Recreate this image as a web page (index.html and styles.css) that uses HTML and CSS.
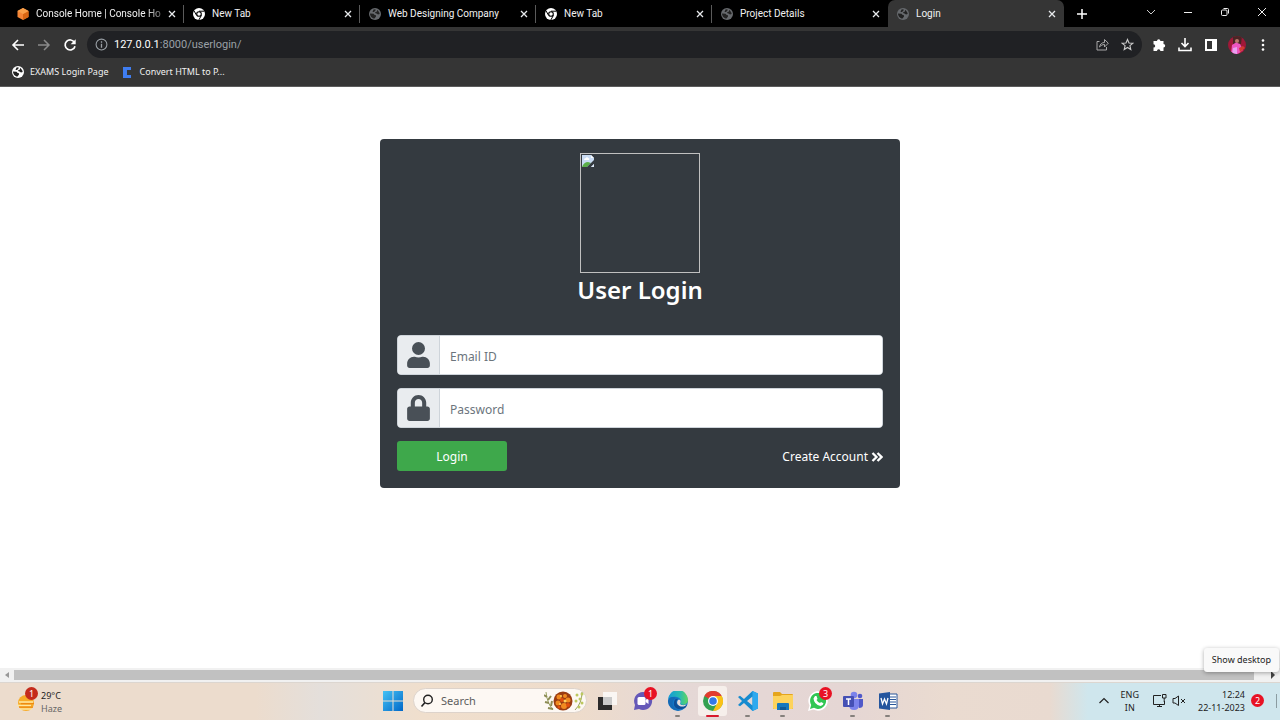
FILE: index.html
```html
<!DOCTYPE html>
<html lang="en">
<head>
<meta charset="utf-8">
<meta name="viewport" content="width=device-width, initial-scale=1">
<title>Login</title>
<link rel="stylesheet" href="styles.css">
</head>
<body>
<svg class="defs" aria-hidden="true">
  <symbol id="globe" viewBox="0 0 12 12"><circle cx="6" cy="6" r="6" fill="currentColor"/><path d="M1 5.500 4.500 5.800C5.500 6.300 5.200 7.400 7 7.200L7 8.500 5.500 10.500C3 10.500 1 8 1 5.500ZM4.500 1.500 6.500 1.200 6.500 2.500 5 4 3.500 4ZM8 1.800C9.500 3 10.500 4.500 10.700 6L9 6.500 7.500 5.500 6 5 6.500 4 8 3.500Z" class="globe-land"/></symbol>
  <symbol id="chrome-mono" viewBox="0 0 12 12"><circle cx="6" cy="6" r="6" fill="#fff"/><circle cx="6" cy="6" r="2.300" fill="#fff" stroke="#000" stroke-width="1.100"/><path d="M6 3.200H11.300M3.600 7.400 1 2.800M8.400 7.400 5.800 12" stroke="#000" stroke-width="1"/></symbol>
  <symbol id="x" viewBox="0 0 8 8"><path d="M1 1 7 7M7 1 1 7" stroke="#e8eaed" stroke-width="1.300" fill="none"/></symbol>
</svg>

<header class="browser">
  <nav class="tabs" aria-label="Tabs">
    <div class="tab"><svg class="favicon" viewBox="0 0 12 12"><path d="M6 0 11.500 3V9L6 12 .5 9V3Z" fill="#f58536"/><path d="M6 6 11.500 3V9L6 12Z" fill="#d86613"/><path d="M6 0 11.500 3 6 6 .5 3Z" fill="#f9a04a"/></svg><span class="tab-title fade">Console Home | Console Ho</span><button class="close" aria-label="Close tab"><svg><use href="#x"/></svg></button></div>
    <div class="tab"><svg class="favicon"><use href="#chrome-mono"/></svg><span class="tab-title">New Tab</span><button class="close" aria-label="Close tab"><svg><use href="#x"/></svg></button></div>
    <div class="tab"><svg class="favicon dim"><use href="#globe"/></svg><span class="tab-title">Web Designing Company</span><button class="close" aria-label="Close tab"><svg><use href="#x"/></svg></button></div>
    <div class="tab"><svg class="favicon"><use href="#chrome-mono"/></svg><span class="tab-title">New Tab</span><button class="close" aria-label="Close tab"><svg><use href="#x"/></svg></button></div>
    <div class="tab last"><svg class="favicon dim"><use href="#globe"/></svg><span class="tab-title">Project Details</span><button class="close" aria-label="Close tab"><svg><use href="#x"/></svg></button></div>
    <div class="tab active"><svg class="favicon dim"><use href="#globe"/></svg><span class="tab-title">Login</span><button class="close" aria-label="Close tab"><svg><use href="#x"/></svg></button></div>
    <button class="new-tab" aria-label="New tab"><svg viewBox="0 0 10 10"><path d="M5 0V10M0 5H10" stroke="#fff" stroke-width="1.500"/></svg></button>
    <div class="window-controls">
      <button aria-label="Search tabs"><svg viewBox="0 0 10 10"><path d="M1 3 5 7 9 3" stroke="#ccc" fill="none"/></svg></button>
      <button aria-label="Minimize"><svg viewBox="0 0 10 10"><path d="M1 5.500H9" stroke="#eee"/></svg></button>
      <button aria-label="Restore"><svg viewBox="0 0 10 10"><rect x="1.500" y="3" width="5.500" height="5.500" rx="1" stroke="#eee" fill="none"/><path d="M3.500 1.500H7.500Q8.500 1.500 8.500 2.500V6.500" stroke="#eee" fill="none"/></svg></button>
      <button aria-label="Close"><svg viewBox="0 0 10 10"><path d="M1 1 9 9M9 1 1 9" stroke="#eee"/></svg></button>
    </div>
  </nav>

  <div class="toolbar">
    <div class="nav-buttons">
      <button aria-label="Back"><svg viewBox="0 0 14 14"><path d="M13 7H2M7 2 2 7 7 12" fill="none" stroke="#fff" stroke-width="1.600"/></svg></button>
      <button aria-label="Forward"><svg viewBox="0 0 14 14"><path d="M1 7H12M7 2 12 7 7 12" fill="none" stroke="#8a8a8a" stroke-width="1.500"/></svg></button>
      <button aria-label="Reload"><svg viewBox="0 0 14 14"><path d="M11.500 4.500A5 5 0 1 0 12 8.200" fill="none" stroke="#fff" stroke-width="1.700"/><path d="M12.700 1.200V6.300H7.600Z" fill="#fff"/></svg></button>
    </div>
    <div class="omnibox">
      <svg class="info" viewBox="0 0 12 12"><circle cx="6" cy="6" r="5" fill="none" stroke="#9aa0a6"/><path d="M6 5.200V9M6 3V4.300" stroke="#9aa0a6" stroke-width="1.200"/></svg>
      <span class="url">127.0.0.1<span>:8000/userlogin/</span></span>
      <button aria-label="Share"><svg viewBox="0 0 13 13"><path d="M3.500 3.500H1V12H10.500V9M3.500 9C4 6 6 4.500 8.500 4.500V1.500L12.300 5.200 8.500 9V6.500C6.500 6.500 5 7.300 3.500 9Z" fill="none" stroke="#a8a8a8"/></svg></button>
      <button aria-label="Bookmark this page"><svg viewBox="0 0 13 13"><path d="M6.500 1.500 8 5 11.800 5.300 8.900 7.700 9.800 11.500 6.500 9.500 3.200 11.500 4.100 7.700 1.200 5.300 5 5Z" fill="none" stroke="#ccc" stroke-width="1.100"/></svg></button>
    </div>
    <div class="actions">
      <button aria-label="Extensions"><svg viewBox="0 0 14 14"><path d="M1.500 3H5A1.700 1.700 0 1 1 8.400 3H11.500V6A1.700 1.700 0 1 1 11.500 9.400V13H8.400A1.700 1.700 0 0 0 5 13H1.500V9.600A1.700 1.700 0 0 0 1.500 6.200Z" fill="#fff"/></svg></button>
      <button aria-label="Downloads"><svg viewBox="0 0 14 14"><path d="M7 0V8M3.500 5 7 8.500 10.500 5M1 9.500V12.500H13V9.500" fill="none" stroke="#fff" stroke-width="1.600"/></svg></button>
      <button aria-label="Side panel"><svg viewBox="0 0 14 14"><path d="M1 1H13V13H1ZM3 3V11H8V3Z" fill="#fff" fill-rule="evenodd"/></svg></button>
      <button aria-label="Profile"><svg class="avatar" viewBox="0 0 18 18"><clipPath id="round"><circle cx="9" cy="9" r="9"/></clipPath><g clip-path="url(#round)"><path d="M0 0H18V18H0Z" fill="#a01838"/><path d="M5 0H14L13 8H5Z" fill="#4a2525"/><circle cx="9" cy="5" r="2" fill="#b97b6c"/><path d="M4 9 8 6.500 12 8 15 14 10 18H3Z" fill="#ee55c0"/><path d="M5 12 9 11 9 18H4Z" fill="#e8a0f0"/><path d="M11 12 15 10 17 12 12 16Z" fill="#d23a30"/></g></svg></button>
      <button aria-label="Menu"><svg viewBox="0 0 14 14"><g fill="#fff"><circle cx="7" cy="2.500" r="1.300"/><circle cx="7" cy="7" r="1.300"/><circle cx="7" cy="11.500" r="1.300"/></g></svg></button>
    </div>
  </div>

  <nav class="bookmarks" aria-label="Bookmarks">
    <a href="#"><svg class="favicon light"><use href="#globe"/></svg>EXAMS Login Page</a>
    <a href="#"><svg class="favicon" viewBox="0 0 12 12"><path d="M1 1H9V4H5V9H9V12H1Z" fill="#3f7df0"/></svg>Convert HTML to P...</a>
  </nav>
</header>

<main class="page">
  <form class="card">
    <div class="missing-image" role="img" aria-label="Logo"><svg viewBox="0 0 14 14"><path d="M1 1H10L13 4V13H1Z" fill="#c9dbf3"/><path d="M10 1 13 4H10Z" fill="#f7fafe"/><path d="M3 6Q3 4 5 4 6 2 7 4 9 4 8 6Z" fill="#fff"/><path d="M1 13Q3 8 7 8L10 9 6 13Z" fill="#5aae49"/><path d="M5 14 14 5V9L9 14Z" fill="#343a40"/><path d="M10 13 13 10V13Z" fill="#dce6f5"/></svg></div>
    <h1>User Login</h1>
    <div class="field">
      <label for="email" aria-label="Email ID"><svg viewBox="0 0 448 512"><path d="M224 256A128 128 0 1 0 224 0a128 128 0 1 0 0 256zm89.600 32h-16.700c-22.200 10.200-46.900 16-72.900 16s-50.600-5.800-72.900-16h-16.700C60.200 288 0 348.200 0 422.400V464c0 26.500 21.500 48 48 48h352c26.500 0 48-21.500 48-48v-41.600c0-74.200-60.200-134.400-134.400-134.400z"/></svg></label>
      <input id="email" type="email" placeholder="Email ID">
    </div>
    <div class="field">
      <label for="password" aria-label="Password"><svg viewBox="0 0 448 512"><path d="M400 224h-24v-72C376 68.200 307.800 0 224 0S72 68.200 72 152v72H48c-26.500 0-48 21.500-48 48v192c0 26.500 21.500 48 48 48h352c26.500 0 48-21.500 48-48V272c0-26.500-21.500-48-48-48zm-104 0H152v-72c0-39.700 32.300-72 72-72s72 32.300 72 72v72z"/></svg></label>
      <input id="password" type="password" placeholder="Password">
    </div>
    <div class="form-actions">
      <button class="login" type="button">Login</button>
      <a href="#">Create Account <svg viewBox="0 0 12 10"><path d="M1.500 1 5.500 5 1.500 9M6.500 1 10.500 5 6.500 9" fill="none" stroke="#fff" stroke-width="2.300"/></svg></a>
    </div>
  </form>
</main>

<div class="scrollbar" aria-hidden="true"><span class="arrow"><svg viewBox="0 0 6 8"><path d="M5 1V7L1 4Z" fill="#999"/></svg></span><span class="thumb"></span><span class="arrow end"><svg viewBox="0 0 6 8"><path d="M1 0V8L5 4Z" fill="#444"/></svg></span></div>

<footer class="taskbar">
  <div class="weather">
    <span class="weather-icon"><svg viewBox="0 0 20 20"><circle cx="10" cy="11" r="8" fill="#f7ac28"/><path d="M3 10H17M1 13.500H15M4 17H16" stroke="#ffe7a3" stroke-width="1.300"/><path d="M5 11.700H18M3 15.200H17" stroke="#ee8a12" stroke-width="1.300"/></svg><b class="badge dark">1</b></span>
    <span class="weather-text">29°C<small>Haze</small></span>
  </div>
  <div class="apps">
    <button aria-label="Start"><svg viewBox="0 0 20 20"><defs><linearGradient id="win" x2="1" y2="1"><stop stop-color="#45c3f5"/><stop offset="1" stop-color="#0067c8"/></linearGradient></defs><path d="M0 0H9.500V9.500H0ZM10.500 0H20V9.500H10.500ZM0 10.500H9.500V20H0ZM10.500 10.500H20V20H10.500Z" fill="url(#win)"/></svg></button>
    <label class="search"><svg viewBox="0 0 14 14"><circle cx="8" cy="5.500" r="4.300" fill="none" stroke="#222" stroke-width="1.400"/><path d="M5 8.500 1.500 12.500" stroke="#222" stroke-width="1.600"/></svg><input type="text" placeholder="Search" aria-label="Search"><svg class="wreath" viewBox="0 0 40 22"><path d="M2 2Q3 13 9 20M38 2Q38 13 31 20" stroke="#98a25f" fill="none"/><path d="M3 7 0 5M4 10 7 6M5 13 1 12M7 16 8 11M9 19 4 18" stroke="#8d8c55" stroke-width="2"/><g fill="#bdc85f"><circle cx="33" cy="5" r="1.500"/><circle cx="36" cy="9" r="1.500"/><circle cx="32" cy="11" r="1.500"/><circle cx="38" cy="13" r="1.500"/><circle cx="35" cy="17" r="1.500"/><circle cx="38" cy="4" r="1.500"/></g><circle cx="19" cy="11" r="9.500" fill="#9a3c12"/><g fill="#f18a20"><circle cx="15" cy="7" r="2.500"/><circle cx="21" cy="6" r="2"/><circle cx="24" cy="10" r="2.500"/><circle cx="14" cy="13" r="2.500"/><circle cx="20" cy="16" r="3"/></g><g fill="#e24e0d"><circle cx="18" cy="10" r="2"/><circle cx="24" cy="15" r="2"/><circle cx="15" cy="17" r="1.500"/></g><g fill="#ffd25e"><circle cx="17" cy="6" r="1"/><circle cx="21" cy="11" r="1.500"/><circle cx="16" cy="14" r="1"/></g></svg></label>
    <button aria-label="Task view"><svg viewBox="0 0 20 20"><path d="M0 6H14V19H0Z" fill="#2b2b2b"/><path d="M5 1H19V14H5Z" fill="#fff" opacity=".75"/></svg></button>
    <button aria-label="Chat"><svg viewBox="0 0 20 20"><path d="M10 1A9 9 0 1 1 6 18L1 19 2 14A9 9 0 0 1 10 1Z" fill="#6558b8"/><rect x="4.500" y="6" width="8" height="8" rx="1.500" fill="#fff"/><path d="M12.500 9 15.500 7V13L12.500 11Z" fill="#fff"/></svg><b class="badge">1</b></button>
    <button class="running" aria-label="Edge"><svg viewBox="0 0 20 20"><defs><linearGradient id="edge" x2="1"><stop stop-color="#159bd8"/><stop offset=".6" stop-color="#29bcae"/><stop offset="1" stop-color="#62d65e"/></linearGradient></defs><circle cx="10" cy="10" r="10" fill="#1577c7"/><path d="M0 9A10 10 0 0 1 20 9C20 13 16 15 12 13 14 11 13 7 9 6 5 5 1 6 0 9Z" fill="url(#edge)"/><path d="M8 7C2 10 4 19 13 19A10 10 0 0 1 0 10C1 6 5 5 8 7Z" fill="#1669b5"/><path d="M10 8C6 11 10 17 17 15L19 14 18 16C13 20 5 18 6 12 6 9 8 7 10 8Z" fill="#114e96"/><path d="M10 9C13 8 13 11 12 13 14 15 18 14 19 13L17 15C12 17 7 13 10 9Z" fill="#e7dcda"/></svg></button>
    <button class="running current" aria-label="Chrome"><svg viewBox="0 0 20 20"><circle cx="10" cy="10" r="10" fill="#34a150"/><path d="M10 10 1.300 5A10 10 0 0 1 18.700 5Z" fill="#e33b2e"/><path d="M10 10V5H18.700A10 10 0 0 1 10 20L14.300 12Z" fill="#fbc116"/><circle cx="10" cy="10" r="5" fill="#fff"/><circle cx="10" cy="10" r="3.800" fill="#3478e5"/></svg></button>
    <button class="running" aria-label="Visual Studio Code"><svg viewBox="0 0 20 20"><path d="M14.500 0 20 2.500V17.500L14.500 20 6 12 2 15.200 0 14 4 10 0 6 2 4.800 6 8ZM14.500 5.500 9 10 14.500 14.500Z" fill="#168bcf" fill-rule="evenodd"/><path d="M14.500 0 20 2.500V17.500L14.500 20Z" fill="#2da9ef"/></svg></button>
    <button class="running" aria-label="File Explorer"><svg viewBox="0 0 20 20"><path d="M0 2Q0 1 1 1H7L9 3H19Q20 3 20 4V18H0Z" fill="#e5a51c"/><path d="M0 5H7L9 4H20V17Q20 18 19 18H1Q0 18 0 17Z" fill="#fdd35c"/><path d="M4 19V13Q4 12 5 12H15Q16 12 16 13V19Z" fill="#1678bd"/><path d="M7 19V16H13V19Z" fill="#0f5b98"/></svg></button>
    <button aria-label="WhatsApp"><svg viewBox="0 0 20 20"><path d="M0 20 1.500 14.500A9.700 9.700 0 1 1 5.500 18.500Z" fill="#fff"/><path d="M2 18 3.200 14A8 8 0 1 1 6 16.800Z" fill="#31c653"/><path d="M7 5 8.500 5 9.500 8 8.500 9Q10 11.500 12 12L13 11 15.500 12.300Q15 15 12.500 15 6 13.500 5.500 7.500Z" fill="#fff"/></svg><b class="badge">3</b></button>
    <button class="running" aria-label="Teams"><svg viewBox="0 0 20 20"><circle cx="11" cy="4" r="3.300" fill="#7b83eb"/><circle cx="17" cy="5" r="2.300" fill="#5059c9"/><path d="M13 8H20V14Q20 17 16 17Z" fill="#5059c9"/><path d="M6 8H16V14Q16 19 11 19 6 19 6 14Z" fill="#7b83eb"/><rect y="5" width="11" height="11" rx="1" fill="#4550b4"/><path d="M3 8H8M5.500 8V14" stroke="#fff" stroke-width="1.500"/></svg></button>
    <button class="running" aria-label="Word"><svg viewBox="0 0 20 20"><path d="M10 3H19V17H10Z" fill="#fff" stroke="#2b579a"/><path d="M12 6H18M12 8.500H18M12 11H18M12 13.500H18" stroke="#2b579a"/><path d="M1 2.500 12 1V19L1 17.500Z" fill="#24559e"/><path d="M3 7 4.500 13 6.500 8 8.500 13 10 7" fill="none" stroke="#fff" stroke-width="1.300"/></svg></button>
  </div>
  <div class="tray">
    <button aria-label="Show hidden icons"><svg viewBox="0 0 12 12"><path d="M1.500 8 6 3.500 10.500 8" fill="none" stroke="#222" stroke-width="1.200"/></svg></button>
    <span class="language">ENG<br>IN</span>
    <span class="status"><svg class="monitor" viewBox="0 0 14 14"><path d="M8 1.500H.5V10.500H11.500V7M4 12.500H9M6.500 10.500V12.500" fill="none" stroke="#222"/><path d="M9.500 .5H13V4H9.500ZM11.200 4V8" fill="none" stroke="#222"/></svg><svg viewBox="0 0 14 14"><path d="M1 4.500H3L6.500 2V11.500L3 9H1Z" fill="none" stroke="#222"/><path d="M9 5 13 9M13 5 9 9" stroke="#222"/></svg></span>
    <time class="clock" datetime="2023-11-22T12:24">12:24<br>22-11-2023</time>
    <b class="badge count">2</b>
    <span class="peek"></span>
    <div class="tooltip" role="tooltip">Show desktop</div>
  </div>
</footer>
</body>
</html>
```
FILE: styles.css
```css
* { box-sizing: border-box; }

body {
  margin: 0;
  min-height: 100vh;
  display: flex;
  flex-direction: column;
  background: #fff;
  font-family: "Noto Sans", "Open Sans", sans-serif;
}

button {
  display: flex;
  align-items: center;
  justify-content: center;
  margin: 0;
  padding: 0;
  border: 0;
  background: none;
  font: inherit;
}

a { color: inherit; text-decoration: none; }
svg { display: block; flex: none; }
.defs { position: absolute; width: 0; height: 0; }

/* Browser frame */
.browser {
  background: #353535;
  border-bottom: 1px solid #5c5c5c;
  color: #f1f1f1;
  font-family: Roboto, sans-serif;
  font-size: 10px;
}

.tabs {
  display: flex;
  height: 27px;
  padding-left: 8px;
  background: #000;
}

.tab {
  flex: 0 1 176px;
  min-width: 0;
  display: flex;
  align-items: center;
  gap: 7px;
  padding: 0 7px 0 9px;
  border-right: 1px solid transparent;
  border-image: linear-gradient(transparent 6px, #5a5a5a 6px 22px, transparent 22px) 1;
}

.tab.last { border-image: none; }

.tab.active {
  background: #353535;
  border-image: none;
  border-radius: 7px 7px 0 0;
}

.tab-title {
  flex: 1;
  white-space: nowrap;
}

.tab-title.fade { mask-image: linear-gradient(90deg, #000 88%, #0006); }
.favicon { width: 12px; height: 12px; }
.dim { color: #66696d; }
.light { color: #fff; }
.globe-land { fill: #222; }
.close svg { width: 8px; height: 8px; }
.new-tab { width: 36px; }
.new-tab svg { width: 10px; height: 10px; }

.window-controls {
  display: flex;
  height: 23px;
  margin-left: auto;
}

.window-controls button { width: 37px; }
.window-controls svg { width: 10px; height: 10px; }

.toolbar {
  display: flex;
  align-items: center;
  gap: 4px;
  padding: 4px 4px 0 5px;
}

.nav-buttons, .actions { display: flex; }
.nav-buttons button, .actions button { width: 26px; height: 26px; }
.nav-buttons svg, .actions svg { width: 14px; height: 14px; }
.actions .avatar { width: 18px; height: 18px; }

.omnibox {
  flex: 1;
  display: flex;
  align-items: center;
  gap: 12px;
  height: 27px;
  padding: 0 8px;
  border-radius: 14px;
  background: #202124;
}

.omnibox svg { width: 13px; height: 13px; }
.url { flex: 1; margin-left: -6px; font-size: 11px; color: #fff; }
.url span { color: #9aa0a6; }

.bookmarks {
  display: flex;
  gap: 13px;
  padding: 6px 12px 7px;
  font-family: "Noto Sans", sans-serif;
  font-size: 9px;
}

.bookmarks a {
  display: flex;
  align-items: center;
  gap: 6px;
  line-height: 15px;
}

/* Login page */
.page {
  flex: 1;
  padding: 52px 16px;
}

.card {
  max-width: 520px;
  margin: 0 auto;
  padding: 14px 17px 17px;
  border-radius: 4px;
  background: #343a40;
  color: #fff;
  font-size: 12px;
}

.missing-image {
  width: 120px;
  height: 120px;
  margin: 0 auto;
  border: 1px solid #c0c0c0;
}

.missing-image svg { width: 14px; height: 14px; }

h1 {
  margin: 0 0 29px;
  font-size: 24px;
  font-weight: 600;
  line-height: 33px;
  text-align: center;
}

.field {
  display: flex;
  height: 40px;
  margin-bottom: 13px;
  border: 1px solid #ced4da;
  border-radius: 4px;
  background: #fff;
  overflow: hidden;
}

.field label {
  display: flex;
  align-items: center;
  padding: 0 9px;
  border-right: 1px solid #ced4da;
  background: #e9ecef;
}

.field svg { width: 23px; height: 26px; fill: #495057; }

.field input {
  flex: 1;
  min-width: 0;
  padding: 2px 10px 0;
  border: 0;
  outline: 0;
  background: #fff;
  font: inherit;
}

.field input::placeholder { color: #6c757d; }

.form-actions {
  display: flex;
  align-items: center;
  justify-content: space-between;
}

.login {
  width: 110px;
  height: 30px;
  border-radius: 3px;
  background: #3ea84b;
  color: #fff;
}

.form-actions a { display: flex; align-items: center; gap: 3px; padding-top: 1px; }
.form-actions svg { width: 12px; height: 10px; }

/* Horizontal scrollbar */
.scrollbar {
  display: flex;
  height: 14px;
  padding: 2px 0;
  background: #f1f1f1;
}

.thumb { flex: 1; background: #c1c1c1; }
.arrow { display: flex; align-items: center; justify-content: center; width: 14px; }
.arrow.end { justify-content: flex-end; width: 26px; padding-right: 4px; }
.arrow svg { width: 6px; height: 8px; }

/* Taskbar */
.taskbar {
  display: grid;
  grid-template-columns: 1fr auto 1fr;
  height: 38px;
  border-top: 1px solid #dcd6d0;
  background: linear-gradient(90deg, #ecdccd 0, #ecdccd 20%, #e4dfdb 25%, #f0dfcd 33%, #eedccb 45%, #e5d8d6 53%, #e5d6d4 66%, #eadbd0 74%, #e9dad0 82%, #cfe6ed 85%, #cfe6ed 100%);
  color: #222;
  font-size: 9px;
}

.weather { display: flex; align-items: center; gap: 5px; padding-left: 16px; }
.weather-icon { position: relative; }
.weather-icon svg { width: 20px; height: 20px; }
.weather-text { line-height: 13px; }
.weather-text small { display: block; font-size: 9px; color: #666; }

.badge {
  position: absolute;
  top: -5px;
  right: -5px;
  width: 13px;
  height: 13px;
  border-radius: 50%;
  background: #e81224;
  color: #fff;
  font-size: 9px;
  font-weight: 400;
  line-height: 13px;
  text-align: center;
}

.badge.dark { background: #c42b1c; right: -2px; }

.apps { display: flex; align-items: center; padding-bottom: 2px; }
.apps button { position: relative; width: 35px; height: 32px; }
.apps button svg { width: 20px; height: 20px; }
.apps .badge { top: 2px; right: 3px; }

.search {
  display: flex;
  align-items: center;
  width: 174px;
  height: 25px;
  margin: 0 3px;
  padding: 0 2px 0 6px;
  border: 1px solid #ddd3cb;
  border-radius: 13px;
  background: #fdf8f3;
}

.search svg { width: 14px; height: 14px; }
.search .wreath { width: 40px; height: 22px; }

.search input {
  flex: 1;
  min-width: 0;
  padding: 0 7px;
  border: 0;
  outline: 0;
  background: none;
  font: inherit;
  font-size: 11px;
}

.search input::placeholder { color: #5c5c5c; }

.running::after {
  content: "";
  position: absolute;
  bottom: 0;
  left: 15px;
  width: 5px;
  height: 2px;
  border-radius: 1px;
  background: #85807c;
}

.current::before {
  content: "";
  position: absolute;
  inset: 1px 3px;
  border-radius: 3px;
  background: #f6efeb;
}

.current svg { position: relative; }
.current::after { left: 11px; width: 13px; background: #d7192d; }

.tray {
  position: relative;
  display: flex;
  align-items: center;
  justify-content: flex-end;
  padding: 0 3px 2px 0;
}

.tray button svg { width: 12px; height: 12px; }
.language { margin-left: 11px; line-height: 13px; text-align: center; }
.status { display: flex; gap: 5px; margin: 0 12px 0 14px; }
.status svg { width: 14px; height: 14px; }
.clock { line-height: 13px; text-align: right; }
.badge.count { position: static; margin: 0 12px 0 6px; }
.peek { width: 1px; height: 14px; background: #8b9ca1; }

.tooltip {
  position: absolute;
  right: 1px;
  bottom: 48px;
  padding: 5px 8px;
  border-radius: 3px;
  background: #f9f9f9;
  box-shadow: 0 1px 4px #0005;
  line-height: 14px;
  white-space: nowrap;
}
```
